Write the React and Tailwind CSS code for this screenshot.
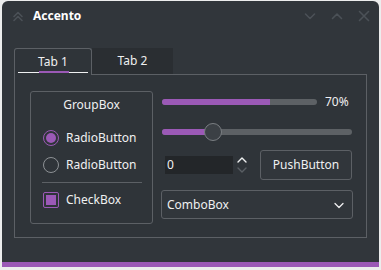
const FONT = { fontFamily: '"Noto Sans", "Open Sans", sans-serif' };

function TitleIcon({ children }) {
  return (
    <svg width="14" height="14" viewBox="0 0 14 14" fill="none" stroke="#4b5157" strokeWidth="1.6" strokeLinecap="round" strokeLinejoin="round">
      {children}
    </svg>
  );
}

function Radio({ checked, label }) {
  return (
    <div className="flex items-center h-[18px]">
      <span
        className={`w-[16px] h-[16px] rounded-full border flex items-center justify-center ${
          checked ? 'border-[#9b59b6]' : 'border-[#8d9195]'
        }`}
      >
        {checked && <span className="w-[10px] h-[10px] rounded-full bg-[#9b59b6]" />}
      </span>
      <span className="ml-[7px] text-[12px]">{label}</span>
    </div>
  );
}

export default function App() {
  return (
    <div className="w-[381px] h-[270px] bg-[#eceded] pt-[1px] pl-[2px] pr-[2px] text-[#eff0f1]" style={FONT}>
      <div className="h-[266px] rounded-t-[6px] bg-[#31363b] flex flex-col overflow-hidden">
        {/* title bar */}
        <div className="h-[30px] flex items-center pl-[9px] pr-[8px]">
          <TitleIcon>
            <path d="M3 7.5 L7 3.5 L11 7.5" />
            <path d="M3 11.5 L7 7.5 L11 11.5" />
          </TitleIcon>
          <span className="ml-[8px] text-[12px] font-bold text-white">Accento</span>
          <div className="ml-auto flex items-center gap-[13px]">
            <TitleIcon>
              <path d="M2.5 5 L7 9.5 L11.5 5" />
            </TitleIcon>
            <TitleIcon>
              <path d="M2.5 9.5 L7 5 L11.5 9.5" />
            </TitleIcon>
            <TitleIcon>
              <path d="M2.5 2.5 L11.5 11.5 M11.5 2.5 L2.5 11.5" />
            </TitleIcon>
          </div>
        </div>

        {/* content */}
        <div className="flex-1 pt-[17px] pl-[12px] pr-[12px]">
          {/* tabs */}
          <div className="flex h-[27px]">
            <div className="relative w-[78px] border border-b-0 border-[#5c6065] rounded-t-[3px] flex items-center justify-center text-[12px] bg-[#2f3439]">
              Tab 1
              <div className="absolute left-[3px] right-[3px] bottom-[2px] h-[1px] bg-[#eff0f1]" />
              <div className="absolute left-[24px] w-[30px] bottom-[2px] h-[2px] bg-[#9b59b6]" />
            </div>
            <div className="w-[81px] bg-[#2a2e32] border-b border-[#5c6065] flex items-center justify-center text-[12px]">
              Tab 2
            </div>
            <div className="flex-1 border-b border-[#5c6065]" />
          </div>

          {/* panel */}
          <div className="h-[163px] border border-t-0 border-[#5c6065] flex pl-[15px] pt-[16px] bg-[#2f3439]">
            {/* groupbox */}
            <div className="w-[123px] h-[133px] border border-[#5c6065] rounded-[3px] flex flex-col items-center">
              <div className="mt-[4px] text-[12px] h-[18px] leading-[18px]">GroupBox</div>
              <div className="w-full pl-[12px] mt-[15px] flex flex-col gap-[9px]">
                <Radio checked label="RadioButton" />
                <Radio label="RadioButton" />
              </div>
              <div className="w-[100px] h-px bg-[#5c6065] mt-[8px]" />
              <div className="w-full pl-[12px] mt-[8px] flex items-center">
                <span className="w-[16px] h-[16px] border border-[#9b59b6] rounded-[2px] flex items-center justify-center">
                  <span className="w-[10px] h-[10px] bg-[#9b59b6]" />
                </span>
                <span className="ml-[7px] text-[12px]">CheckBox</span>
              </div>
            </div>

            {/* right column */}
            <div className="ml-[8px] w-[192px] flex flex-col">
              <div className="flex items-center h-[18px] mt-[2px]">
                <div className="ml-[1px] w-[155px] h-[6px] rounded-full bg-[#5d6165] overflow-hidden">
                  <div className="w-[108px] h-full bg-[#9b59b6]" />
                </div>
                <span className="ml-[8px] text-[12px]">70%</span>
              </div>
              <div className="relative mt-[12px] h-[18px] flex items-center">
                <div className="ml-[1px] w-[190px] h-[6px] rounded-full bg-[#5d6165] overflow-hidden">
                  <div className="w-[52px] h-full bg-[#9b59b6]" />
                </div>
                <span className="absolute left-[43px] top-0 w-[18px] h-[18px] rounded-full bg-[#3b4045] border border-[#7a7e82]" />
              </div>
              <div className="mt-[9px] flex items-center h-[30px]">
                <div className="ml-[4px] w-[68px] h-[18px] bg-[#232629] text-[12px] leading-[18px] pl-[2px]">0</div>
                <svg className="ml-[3px]" width="12" height="22" viewBox="0 0 12 22" fill="none" strokeWidth="1.4" strokeLinecap="round" strokeLinejoin="round">
                  <path d="M2 8 L6 4 L10 8" stroke="#eff0f1" />
                  <path d="M2 14 L6 18 L10 14" stroke="#5a5f64" />
                </svg>
                <div className="ml-[12px] w-[92px] h-[30px] border border-[#5c6065] rounded-[3px] bg-[#31363b] flex items-center justify-center text-[12px]">
                  PushButton
                </div>
              </div>
              <div className="mt-[10px] h-[29px] border border-[#5c6065] rounded-[3px] bg-[#31363b] flex items-center pl-[5px] pr-[7px] text-[12px]">
                ComboBox
                <svg className="ml-auto" width="12" height="12" viewBox="0 0 12 12" fill="none" stroke="#eff0f1" strokeWidth="1.3" strokeLinecap="round" strokeLinejoin="round">
                  <path d="M2 4.5 L6 8.5 L10 4.5" />
                </svg>
              </div>
            </div>
          </div>
        </div>

        <div className="h-[5px] bg-[#9b59b6]" />
      </div>
    </div>
  );
}
